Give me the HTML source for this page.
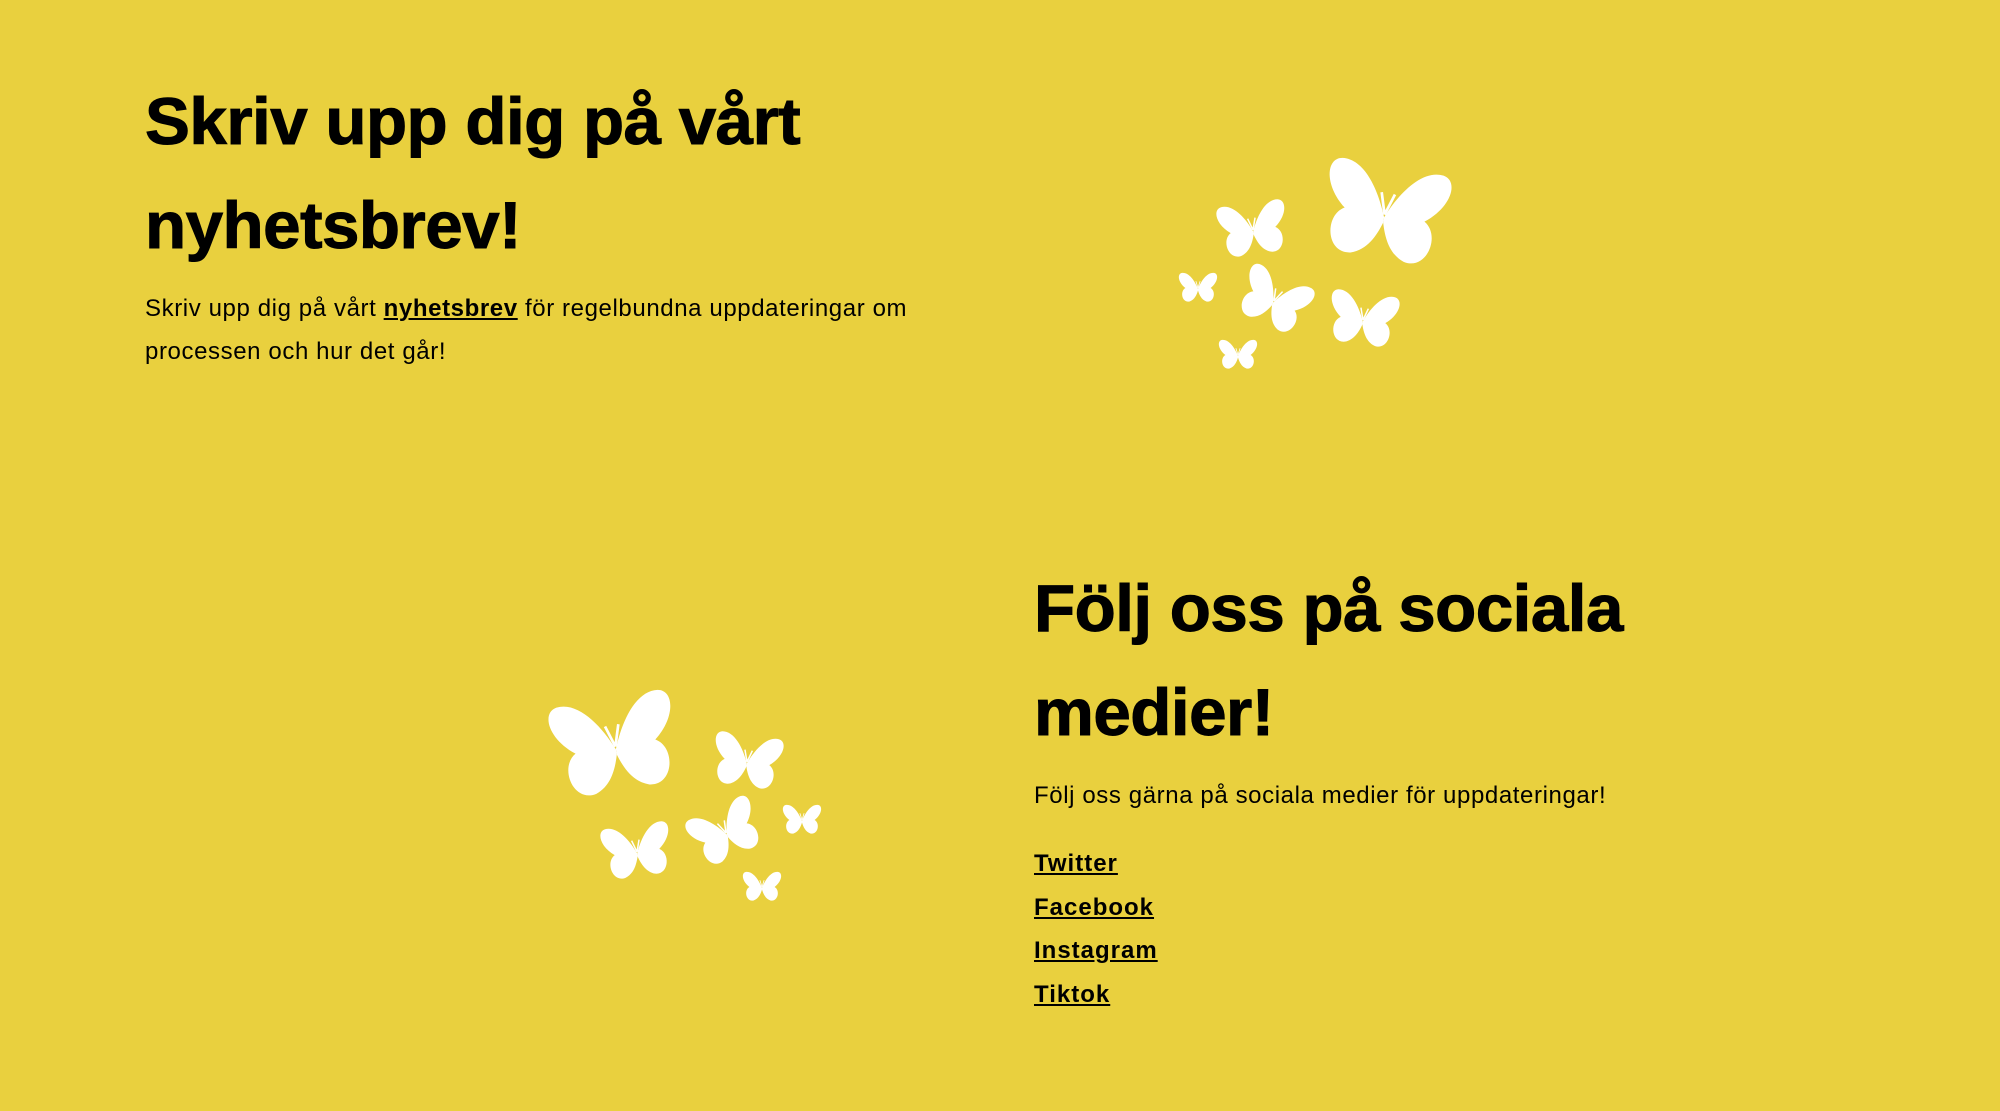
<!DOCTYPE html>
<html><head><meta charset="utf-8"><style>
html,body{margin:0;padding:0}
body{width:2000px;height:1111px;background:#e9d03e;position:relative;overflow:hidden;font-family:"Liberation Sans",sans-serif;color:#000}
.h{position:absolute;font-weight:bold;font-size:66px;line-height:104px;margin:0;transform:scaleX(1.02);transform-origin:left top;white-space:nowrap;letter-spacing:-0.5px;-webkit-text-stroke:1px #000}
.p{position:absolute;font-size:24px;line-height:43px;margin:0;white-space:nowrap;letter-spacing:0.6px}
a{color:#000;font-weight:bold;text-decoration:underline}
.links{position:absolute;left:1034px;top:842px;font-size:24px;line-height:43.5px;letter-spacing:1px}
.links a{display:block}
svg{position:absolute}
</style></head><body>
<h1 class="h" style="left:145px;top:69px">Skriv upp dig på vårt<br>nyhetsbrev!</h1>
<p class="p" style="left:145px;top:287px">Skriv upp dig på vårt <a>nyhetsbrev</a> för regelbundna uppdateringar om<br>processen och hur det går!</p>
<h1 class="h" style="left:1034px;top:556px">Följ oss på sociala<br>medier!</h1>
<p class="p" style="left:1034px;top:774px">Följ oss gärna på sociala medier för uppdateringar!</p>
<div class="links"><a>Twitter</a><a>Facebook</a><a>Instagram</a><a>Tiktok</a></div>
<svg width="0" height="0" style="position:absolute">
<defs><symbol id="b" viewBox="0 0 100 80">
<path fill="#fff" d="M50 42 C42 22 28 2 12 4 C0 6 2 26 20 40 C6 48 12 76 30 72 C42 68 47 56 50 46 Z"/>
<path fill="#fff" d="M50 42 C58 22 72 2 88 4 C100 6 98 26 80 40 C94 48 88 76 70 72 C58 68 53 56 50 46 Z"/>
<path stroke="#fff" stroke-width="2" fill="none" d="M50 40 L45 24 M50 40 L55 24"/>
</symbol></defs></svg>
<svg id="g1" width="280" height="225" style="left:1172px;top:150px" viewBox="0 0 280 225">
<use href="#b" x="145" y="2" width="135" height="125" transform="rotate(10 212 65)"/>
<use href="#b" x="40" y="50" width="82" height="60" transform="rotate(-8 81 80)"/>
<use href="#b" x="5" y="118" width="42" height="40"/>
<use href="#b" x="64" y="112" width="76" height="78" transform="rotate(25 102 151)"/>
<use href="#b" x="150" y="140" width="82" height="60" transform="rotate(8 191 170)"/>
<use href="#b" x="45" y="185" width="42" height="40"/>
</svg>
<svg id="g2" width="280" height="225" style="left:548px;top:682px;transform:scaleX(-1)" viewBox="0 0 280 225">
<use href="#b" x="145" y="2" width="135" height="125" transform="rotate(10 212 65)"/>
<use href="#b" x="40" y="50" width="82" height="60" transform="rotate(-8 81 80)"/>
<use href="#b" x="5" y="118" width="42" height="40"/>
<use href="#b" x="64" y="112" width="76" height="78" transform="rotate(25 102 151)"/>
<use href="#b" x="150" y="140" width="82" height="60" transform="rotate(8 191 170)"/>
<use href="#b" x="45" y="185" width="42" height="40"/>
</svg>
</body></html>
